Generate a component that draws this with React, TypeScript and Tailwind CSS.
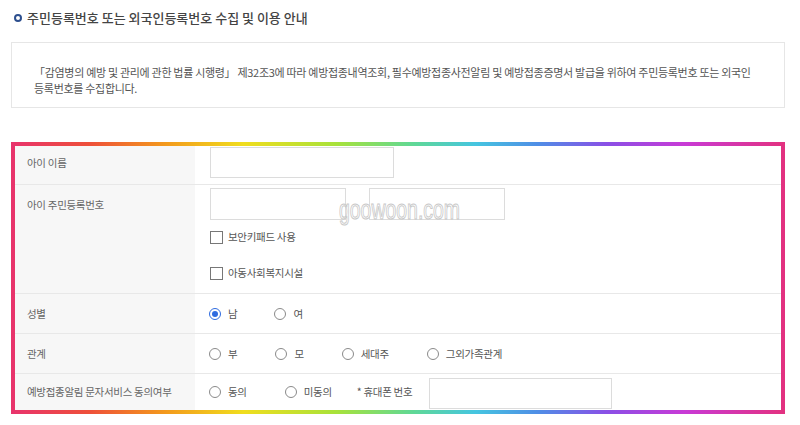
import React from "react";

function Radio({ checked, label }: { checked?: boolean; label: string }) {
  return (
    <div className="flex items-center gap-[7px]">
      {checked ? (
        <span className="w-[12px] h-[12px] rounded-full border border-[#2e6be0] flex items-center justify-center bg-white">
          <span className="w-[6px] h-[6px] rounded-full bg-[#2e6be0]" />
        </span>
      ) : (
        <span className="w-[12px] h-[12px] rounded-full border border-[#8a8a8a] bg-white" />
      )}
      <span>{label}</span>
    </div>
  );
}

function Check({ label }: { label: string }) {
  return (
    <div className="flex items-center gap-[5px]">
      <span className="w-[13px] h-[13px] border border-[#777] bg-white" />
      <span>{label}</span>
    </div>
  );
}

export default function App() {
  return (
    <div className="w-[800px] h-[425px] bg-white relative overflow-hidden font-['Noto_Sans_CJK_KR','Noto_Sans',sans-serif]">
      <div className="pl-[11px] pr-[15px]">
        {/* Title */}
        <div className="pt-[10px] pl-[3px] flex items-center gap-[5px]">
          <span className="w-[8px] h-[8px] rounded-full border-2 border-[#2d4f8e]" />
          <span className="text-[13px] leading-[16px] tracking-[0px] text-[#444] font-medium">
            주민등록번호 또는 외국인등록번호 수집 및 이용 안내
          </span>
        </div>

        {/* Info box */}
        <div className="mt-[16px] h-[66px] border border-[#e6e6e6] pl-[22px] pt-[21px] text-[11px] leading-[16px] tracking-[-0.3px] text-[#555]">
          <div className="whitespace-nowrap">
            「감염병의 예방 및 관리에 관한 법률 시행령」 제32조3에 따라 예방접종내역조회, 필수예방접종사전알림 및 예방접종증명서 발급을 위하여 주민등록번호 또는 외국인
          </div>
          <div className="whitespace-nowrap">등록번호를 수집합니다.</div>
        </div>

        {/* Frame */}
        <div className="mt-[34px] p-[4px] bg-[linear-gradient(90deg,#e8336d_0%,#ee4f3a_10%,#f39a1c_20%,#f0dd1e_30%,#a8e23a_42%,#5fd896_52%,#45c5e0_60%,#4f8ee6_68%,#8a4fe6_77%,#c83ad6_87%,#e3317f_100%)]">
          <div className="bg-white text-[10.5px] leading-[16px] tracking-[-0.3px] text-[#555]">
            {/* Row 1 */}
            <div className="flex h-[39px] border-b border-[#e8e8e8]">
              <div className="w-[180px] bg-[#f7f7f7] pl-[12px] pt-[9px] text-[#666]">아이 이름</div>
              <div className="pl-[15px] pt-px">
                <div className="w-[184px] h-[31px] border border-[#dcdcdc] bg-white" />
              </div>
            </div>

            {/* Row 2 */}
            <div className="flex h-[109px] border-b border-[#e8e8e8]">
              <div className="w-[180px] bg-[#f7f7f7] pl-[12px] pt-[12px] text-[#666]">아이 주민등록번호</div>
              <div className="pl-[15px] pt-[3px] flex flex-col">
                <div className="flex items-center">
                  <div className="w-[136px] h-[32px] border border-[#dcdcdc] bg-white" />
                  <span className="w-[23px] text-center text-[#999]">-</span>
                  <div className="w-[136px] h-[32px] border border-[#dcdcdc] bg-white" />
                </div>
                <div className="mt-[9px]">
                  <Check label="보안키패드 사용" />
                </div>
                <div className="mt-[20px]">
                  <Check label="아동사회복지시설" />
                </div>
              </div>
            </div>

            {/* Row 3 */}
            <div className="flex h-[40px] border-b border-[#e8e8e8]">
              <div className="w-[180px] bg-[#f7f7f7] pl-[12px] flex items-center text-[#666]">성별</div>
              <div className="pl-[14px] flex items-center gap-[37px]">
                <Radio checked label="남" />
                <Radio label="여" />
              </div>
            </div>

            {/* Row 4 */}
            <div className="flex h-[40px] border-b border-[#e8e8e8]">
              <div className="w-[180px] bg-[#f7f7f7] pl-[12px] flex items-center text-[#666]">관계</div>
              <div className="pl-[14px] flex items-center gap-[38px]">
                <Radio label="부" />
                <Radio label="모" />
                <Radio label="세대주" />
                <Radio label="그외가족관계" />
              </div>
            </div>

            {/* Row 5 */}
            <div className="flex h-[36px]">
              <div className="w-[180px] bg-[#f7f7f7] pl-[12px] flex items-center text-[#666]">
                예방접종알림 문자서비스 동의여부
              </div>
              <div className="pl-[14px] flex items-center">
                <Radio label="동의" />
                <div className="ml-[38px]">
                  <Radio label="미동의" />
                </div>
                <span className="ml-[25px]">* 휴대폰 번호</span>
                <div className="ml-[17px] self-start mt-[4px] w-[183px] h-[31px] border border-[#dcdcdc] bg-white" />
              </div>
            </div>
          </div>
        </div>
      </div>

      {/* Watermark */}
      <div className="absolute left-[339px] top-[197px] origin-left scale-x-[0.72] text-[27px] leading-none font-['Liberation_Sans',sans-serif] text-white [-webkit-text-stroke:1px_#c8c8c8] pointer-events-none whitespace-nowrap">
        goowoon.com
      </div>
    </div>
  );
}
